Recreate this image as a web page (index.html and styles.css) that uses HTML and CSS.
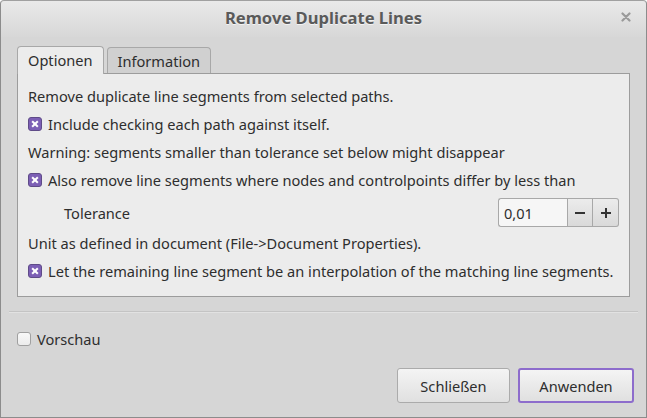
FILE: index.html
```html
<!DOCTYPE html>
<html>
<head>
<meta charset="utf-8">
<link rel="stylesheet" href="styles.css">
</head>
<body>
<div class="window">
  <div class="titlebar">
    <span class="title">Remove Duplicate Lines</span>
    <span class="close">
      <svg width="10" height="10" viewBox="0 0 10 10"><path d="M1.5 1.5 L8.5 8.5 M8.5 1.5 L1.5 8.5" stroke="#9a9a9a" stroke-width="2.2" stroke-linecap="round"/></svg>
    </span>
  </div>
  <div class="content">
    <div class="tabs">
      <div class="tab active">Optionen</div>
      <div class="tab">Information</div>
    </div>
    <div class="panel">
      <div class="row">Remove duplicate line segments from selected paths.</div>
      <div class="row"><span class="cb checked"></span>Include checking each path against itself.</div>
      <div class="row">Warning: segments smaller than tolerance set below might disappear</div>
      <div class="row"><span class="cb checked"></span>Also remove line segments where nodes and controlpoints differ by less than</div>
      <div class="row tol">
        <span class="tol-label">Tolerance</span>
        <div class="spin">
          <div class="entry">0,01</div>
          <div class="sbtn">
            <svg width="12" height="12" viewBox="0 0 12 12"><path d="M1 6 H11" stroke="#333" stroke-width="2"/></svg>
          </div>
          <div class="sbtn">
            <svg width="12" height="12" viewBox="0 0 12 12"><path d="M1 6 H11 M6 1 V11" stroke="#333" stroke-width="2"/></svg>
          </div>
        </div>
      </div>
      <div class="row">Unit as defined in document (File-&gt;Document Properties).</div>
      <div class="row"><span class="cb checked"></span>Let the remaining line segment be an interpolation of the matching line segments.</div>
    </div>
    <div class="sep"></div>
    <div class="preview"><span class="cb empty"></span>Vorschau</div>
    <div class="buttons">
      <div class="btn">Schließen</div>
      <div class="btn default">Anwenden</div>
    </div>
  </div>
</div>
</body>
</html>
```
FILE: styles.css
```css
html, body {
  margin: 0;
  padding: 0;
}
body {
  width: 647px;
  height: 418px;
  font-family: "Noto Sans", "Open Sans", sans-serif;
  font-size: 14.6px;
  color: #2e2e2e;
  overflow: hidden;
}
.window {
  box-sizing: border-box;
  width: 647px;
  height: 418px;
  background: #d6d6d6;
  border: 1px solid #8c8c8c;
  border-top-color: #a0a0a0;
  border-radius: 4px 4px 0 0;
  display: flex;
  flex-direction: column;
}
.titlebar {
  height: 36px;
  flex: none;
  background: linear-gradient(#e9e9e9, #d7d7d7);
  border-radius: 4px 4px 0 0;
  display: flex;
  align-items: center;
  justify-content: center;
  position: relative;
}
.title {
  font-weight: bold;
  font-size: 16.6px;
  color: #5a5a5a;
  text-shadow: 0 1px 0 #f4f4f4;
  margin-top: -3px;
}
.close {
  position: absolute;
  right: 15px;
  top: 11px;
  display: flex;
}
.content {
  padding: 8px 16px 0 16px;
  display: flex;
  flex-direction: column;
}
.tabs {
  display: flex;
  gap: 3px;
  height: 28px;
  align-items: flex-end;
}
.tab {
  box-sizing: border-box;
  height: 26px;
  padding: 0 10px;
  border: 1px solid #a8a8a8;
  border-bottom: none;
  border-radius: 4px 4px 0 0;
  background: #d0d0d0;
  display: flex;
  align-items: center;
  color: #2e2e2e;
}
.tab.active {
  height: 28px;
  background: #ececec;
  margin-bottom: -1px;
  position: relative;
  z-index: 1;
  padding-bottom: 2px;
}
.panel {
  box-sizing: border-box;
  height: 224px;
  background: #ececec;
  border: 1px solid #9c9c9c;
  padding: 8px 10px 0 10px;
  display: flex;
  flex-direction: column;
}
.row {
  height: 28px;
  display: flex;
  align-items: center;
  white-space: nowrap;
}
.row.tol {
  height: 35px;
  margin-top: 1px;
  margin-bottom: -1px;
}
.tol-label {
  margin-left: 36px;
  flex: 1;
}
.cb {
  box-sizing: border-box;
  width: 14px;
  height: 14px;
  border-radius: 3px;
  margin-right: 6px;
  flex: none;
  position: relative;
}
.cb.checked {
  background: #7c5fb5;
  border: 1px solid #5f4b88;
}
.cb.checked::before, .cb.checked::after {
  content: "";
  position: absolute;
  left: 5px;
  top: 2px;
  width: 2px;
  height: 8px;
  background: #fff;
  transform: rotate(45deg);
}
.cb.checked::after {
  transform: rotate(-45deg);
}
.cb.empty {
  background: linear-gradient(#f8f8f8, #ececec);
  border: 1px solid #a0a0a0;
}
.spin {
  display: flex;
  height: 29px;
}
.entry {
  box-sizing: border-box;
  width: 69px;
  height: 29px;
  border: 1px solid #a8a8a8;
  border-right: none;
  border-radius: 3px 0 0 3px;
  background: #f6f6f6;
  padding-left: 5px;
  display: flex;
  align-items: center;
}
.sbtn {
  box-sizing: border-box;
  width: 26px;
  height: 29px;
  border: 1px solid #a8a8a8;
  background: linear-gradient(#ececec, #d9d9d9);
  display: flex;
  align-items: center;
  justify-content: center;
}
.sbtn + .sbtn {
  border-left: none;
  border-radius: 0 3px 3px 0;
}
.sep {
  height: 1px;
  background: #c4c4c4;
  margin: 14px -8px 0 -8px;
  border-bottom: 1px solid #e2e2e2;
}
.preview {
  display: flex;
  align-items: center;
  margin-top: 17px;
  height: 18px;
}
.buttons {
  display: flex;
  justify-content: flex-end;
  gap: 8px;
  margin-top: 20px;
  margin-right: -4px;
}
.btn {
  box-sizing: border-box;
  height: 35px;
  width: 113px;
  border: 1px solid #ababab;
  border-radius: 3px;
  background: linear-gradient(#f4f4f4, #e0e0e0);
  display: flex;
  align-items: center;
  justify-content: center;
  color: #2e2e2e;
}
.btn.default {
  width: 116px;
  border: 2px solid #8d6ccc;
}
```
